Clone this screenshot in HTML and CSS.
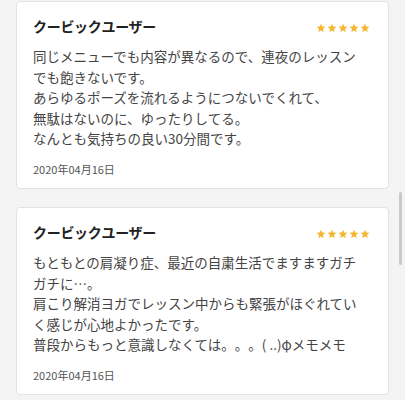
FILE: index.html
```html
<!DOCTYPE html>
<html lang="ja">
<head>
<meta charset="utf-8">
<link rel="stylesheet" href="styles.css">
</head>
<body>
<div class="list">
  <div class="card">
    <div class="head">
      <div class="name">クービックユーザー</div>
      <div class="stars">
        <svg viewBox="0 0 24 24"><path d="M12 1.5l3 7.1 7.5.6-5.7 5 1.8 7.4L12 17.7l-6.6 3.9 1.8-7.4-5.7-5 7.5-.6z"/></svg>
        <svg viewBox="0 0 24 24"><path d="M12 1.5l3 7.1 7.5.6-5.7 5 1.8 7.4L12 17.7l-6.6 3.9 1.8-7.4-5.7-5 7.5-.6z"/></svg>
        <svg viewBox="0 0 24 24"><path d="M12 1.5l3 7.1 7.5.6-5.7 5 1.8 7.4L12 17.7l-6.6 3.9 1.8-7.4-5.7-5 7.5-.6z"/></svg>
        <svg viewBox="0 0 24 24"><path d="M12 1.5l3 7.1 7.5.6-5.7 5 1.8 7.4L12 17.7l-6.6 3.9 1.8-7.4-5.7-5 7.5-.6z"/></svg>
        <svg viewBox="0 0 24 24"><path d="M12 1.5l3 7.1 7.5.6-5.7 5 1.8 7.4L12 17.7l-6.6 3.9 1.8-7.4-5.7-5 7.5-.6z"/></svg>
      </div>
    </div>
    <p class="body">同じメニューでも内容が異なるので、連夜のレッスン<br>でも飽きないです。<br>あらゆるポーズを流れるようにつないでくれて、<br>無駄はないのに、ゆったりしてる。<br>なんとも気持ちの良い30分間です。</p>
    <div class="date">2020年04月16日</div>
  </div>
  <div class="card">
    <div class="head">
      <div class="name">クービックユーザー</div>
      <div class="stars">
        <svg viewBox="0 0 24 24"><path d="M12 1.5l3 7.1 7.5.6-5.7 5 1.8 7.4L12 17.7l-6.6 3.9 1.8-7.4-5.7-5 7.5-.6z"/></svg>
        <svg viewBox="0 0 24 24"><path d="M12 1.5l3 7.1 7.5.6-5.7 5 1.8 7.4L12 17.7l-6.6 3.9 1.8-7.4-5.7-5 7.5-.6z"/></svg>
        <svg viewBox="0 0 24 24"><path d="M12 1.5l3 7.1 7.5.6-5.7 5 1.8 7.4L12 17.7l-6.6 3.9 1.8-7.4-5.7-5 7.5-.6z"/></svg>
        <svg viewBox="0 0 24 24"><path d="M12 1.5l3 7.1 7.5.6-5.7 5 1.8 7.4L12 17.7l-6.6 3.9 1.8-7.4-5.7-5 7.5-.6z"/></svg>
        <svg viewBox="0 0 24 24"><path d="M12 1.5l3 7.1 7.5.6-5.7 5 1.8 7.4L12 17.7l-6.6 3.9 1.8-7.4-5.7-5 7.5-.6z"/></svg>
      </div>
    </div>
    <p class="body">もともとの肩凝り症、最近の自粛生活でますますガチ<br>ガチに…。<br>肩こり解消ヨガでレッスン中からも緊張がほぐれてい<br>く感じが心地よかったです。<br>普段からもっと意識しなくては。。。( ..)φメモメモ</p>
    <div class="date">2020年04月16日</div>
  </div>
</div>
<div class="scrollbar"></div>
</body>
</html>
```

FILE: styles.css
```css
html, body {
  margin: 0;
  padding: 0;
  background: #f4f4f4;
  font-family: "Noto Sans CJK JP", "Noto Sans", sans-serif;
}
.list {
  display: flex;
  flex-direction: column;
  gap: 18px;
  padding: 1px 16px 0 16px;
}
.card {
  box-sizing: border-box;
  height: 188px;
  background: #fff;
  border: 1px solid #e2e2e2;
  border-radius: 4px;
  padding: 14px 18px 12px 16px;
}
.head {
  display: flex;
  justify-content: space-between;
  align-items: center;
  height: 20px;
}
.name {
  font-size: 14px;
  font-weight: 700;
  color: #222;
  line-height: 20px;
  letter-spacing: -0.3px;
}
.stars {
  display: flex;
  gap: 1px;
  margin-top: 4px;
}
.stars svg {
  width: 10px;
  height: 10px;
  fill: #f5b731;
}
.body {
  margin: 10px 0 0 0;
  font-size: 13.5px;
  line-height: 20.5px;
  color: #444;
  text-spacing-trim: space-all;
}
.date {
  margin-top: 12px;
  font-size: 11px;
  line-height: 16px;
  color: #555;
}
.scrollbar {
  position: absolute;
  left: 399px;
  top: 192px;
  width: 3px;
  height: 73px;
  border-radius: 2px;
  background: #c9c9c9;
}
```
